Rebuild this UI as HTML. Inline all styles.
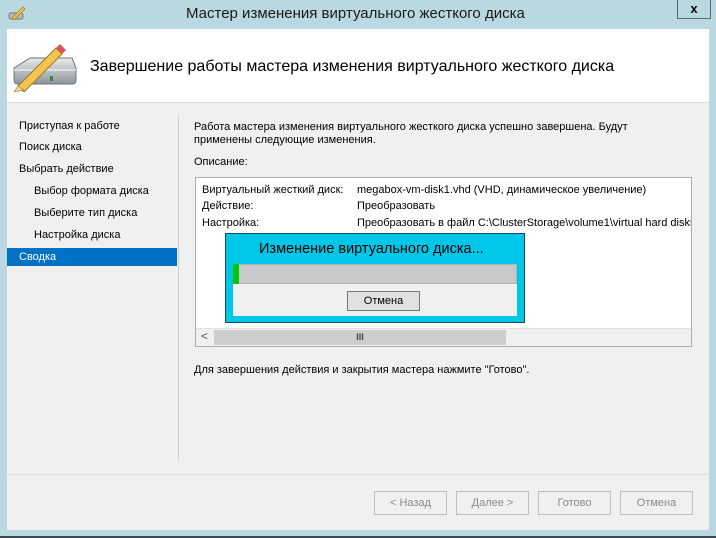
<!DOCTYPE html>
<html><head><meta charset="utf-8"><style>
*{margin:0;padding:0;box-sizing:border-box}
body{width:716px;height:538px;background:#bad8df;font-family:"Liberation Sans","DejaVu Sans",sans-serif;font-size:11px;color:#000;position:relative;overflow:hidden}
.a{position:absolute}
.t{white-space:nowrap}
</style></head><body>
<div class="a" style="left:0;top:536px;width:716px;height:2px;background:#3d4a52"></div>
<svg class="a" style="left:8px;top:5px" width="18" height="16" viewBox="0 0 18 16"><rect x="1" y="8" width="14" height="6" rx="2" fill="#b7bcc0" stroke="#777"/><path d="M4 13 L15 2 L17 4 L6 15 Z" fill="#f2c14e" stroke="#9a7a20" stroke-width=".7"/></svg>
<div class="a t" style="left:186px;top:5px;font-size:15px;color:#1a1a1a">Мастер изменения виртуального жесткого диска</div>
<div class="a" style="left:677px;top:0;width:34px;height:19px;border:1px solid #5a6a72;border-top:none;text-align:center;font-weight:bold;font-size:13px;line-height:17px">x</div>
<div class="a" style="left:7px;top:29px;width:702px;height:501px;background:#f0f0f0"></div>
<div class="a" style="left:7px;top:29px;width:702px;height:74px;background:#fff;border-bottom:1px solid #dcdcdc"></div>
<svg class="a" style="left:10px;top:40px" width="68" height="52" viewBox="0 0 68 52">
<defs><linearGradient id="g" x1="0" y1="0" x2="0" y2="1"><stop offset="0" stop-color="#e8eaec"/><stop offset="1" stop-color="#8d949a"/></linearGradient></defs>
<path d="M4 28 L20 18 L62 18 L66 28 L66 40 Q66 44 62 44 L8 44 Q4 44 4 40 Z" fill="url(#g)" stroke="#6d747a"/>
<path d="M4 30 L66 30" stroke="#fff" stroke-width="1"/>
<rect x="40" y="36" width="3" height="5" fill="#2a8a3a"/>
<path d="M8 46 L46 8 L52 14 L14 52 Z" fill="#f3c451" stroke="#a07a1c"/>
<path d="M46 8 L50 4 L56 10 L52 14 Z" fill="#d55"/>
<path d="M8 46 L4 52 L14 50 Z" fill="#e9d2a0" stroke="#a07a1c" stroke-width=".6"/>
</svg>
<div class="a t" style="left:90px;top:58px;font-size:16px">Завершение работы мастера изменения виртуального жесткого диска</div>
<div class="a t" style="left:19px;top:120px">Приступая к работе</div>
<div class="a t" style="left:19px;top:141px">Поиск диска</div>
<div class="a t" style="left:19px;top:163px">Выбрать действие</div>
<div class="a t" style="left:34px;top:185px">Выбор формата диска</div>
<div class="a t" style="left:34px;top:207px">Выберите тип диска</div>
<div class="a t" style="left:34px;top:229px">Настройка диска</div>
<div class="a" style="left:7px;top:248px;width:170px;height:18px;background:#0072c6;color:#fff;padding:3px 0 0 12px">Сводка</div>
<div class="a" style="left:178px;top:115px;width:1px;height:346px;background:#d0d0d0"></div>
<div class="a" style="left:194px;top:121px;line-height:13px">Работа мастера изменения виртуального жесткого диска успешно завершена. Будут<br>применены следующие изменения.</div>
<div class="a t" style="left:194px;top:156px">Описание:</div>
<div class="a" style="left:195px;top:177px;width:497px;height:170px;background:#fff;border:1px solid #adadad;overflow:hidden">
<div class="a t" style="left:6px;top:6px">Виртуальный жесткий диск:</div>
<div class="a t" style="left:161px;top:6px">megabox-vm-disk1.vhd (VHD, динамическое увеличение)</div>
<div class="a t" style="left:6px;top:22px">Действие:</div>
<div class="a t" style="left:161px;top:22px">Преобразовать</div>
<div class="a t" style="left:6px;top:39px">Настройка:</div>
<div class="a t" style="left:161px;top:39px">Преобразовать в файл C:\ClusterStorage\volume1\virtual hard disks</div>
<div class="a" style="left:0;top:150px;width:495px;height:18px;background:#f0f0f0;border-top:1px solid #e0e0e0"></div>
<div class="a" style="left:5px;top:151px;font-size:12px;color:#555">&lt;</div>
<div class="a" style="left:18px;top:152px;width:292px;height:15px;background:#cdcdcd;text-align:center;font-size:9px;line-height:15px;color:#444;font-weight:bold">III</div>
</div>
<div class="a" style="left:225px;top:233px;width:300px;height:90px;background:#00c6e8;border:1px solid #1b4a58">
<div class="a t" style="left:33px;top:7px;font-size:14.5px">Изменение виртуального диска...</div>
<div class="a" style="left:7px;top:30px;width:284px;height:52px;background:#f0f0f0"></div>
<div class="a" style="left:7px;top:30px;width:284px;height:20px;background:#c9c9c9;border:1px solid #b0b0b0"></div>
<div class="a" style="left:7px;top:30px;width:6px;height:20px;background:#06c706"></div>
<div class="a" style="left:121px;top:57px;width:73px;height:20px;background:#e1e1e1;border:1px solid #767676;text-align:center;line-height:18px">Отмена</div>
</div>
<div class="a t" style="left:194px;top:364px">Для завершения действия и закрытия мастера нажмите "Готово".</div>
<div class="a" style="left:7px;top:474px;width:702px;height:1px;background:#dcdcdc"></div>
<div class="a" style="left:374px;top:491px;width:73px;height:24px;border:1px solid #bfbfbf;color:#8a8a8a;text-align:center;line-height:22px">&lt; Назад</div>
<div class="a" style="left:456px;top:491px;width:73px;height:24px;border:1px solid #bfbfbf;color:#8a8a8a;text-align:center;line-height:22px">Далее &gt;</div>
<div class="a" style="left:538px;top:491px;width:73px;height:24px;border:1px solid #bfbfbf;color:#8a8a8a;text-align:center;line-height:22px">Готово</div>
<div class="a" style="left:620px;top:491px;width:73px;height:24px;border:1px solid #bfbfbf;color:#8a8a8a;text-align:center;line-height:22px">Отмена</div>
</body></html>
